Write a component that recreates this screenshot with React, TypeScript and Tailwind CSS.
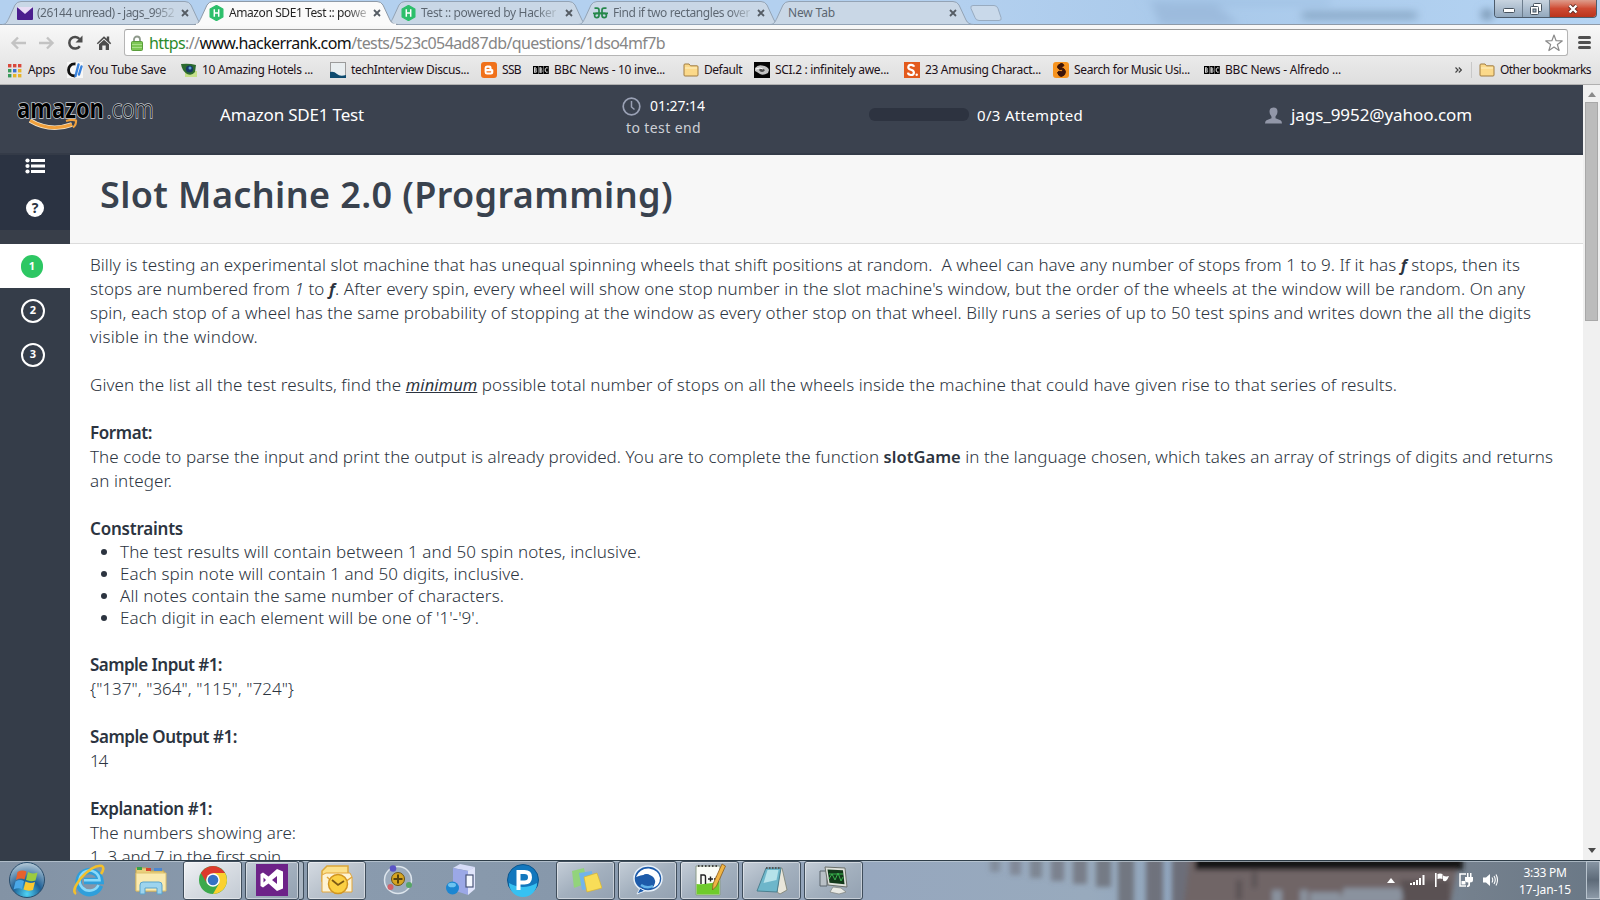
import { useLayoutEffect, useRef, useState } from "react";
import type { ReactNode } from "react";

/** A single line of text whose tracking is computed so that it spans `w` pixels. */
function Fit({ w, className = "", children }: { w: number; className?: string; children: ReactNode }) {
  const ref = useRef<HTMLSpanElement>(null);
  const [spacing, setSpacing] = useState(0);
  useLayoutEffect(() => {
    const el = ref.current;
    if (!el) return;
    const n = (el.textContent || "").length;
    setSpacing((w - el.getBoundingClientRect().width) / n);
  }, [w]);
  return (
    <span className={`block shrink-0 overflow-visible whitespace-pre ${className}`} style={{ width: w }}>
      <span ref={ref} className="inline-block" style={{ letterSpacing: spacing }}>
        {children}
      </span>
    </span>
  );
}

/* ---------- browser chrome ---------- */

function HackerIcon() {
  return (
    <svg width="15" height="16" viewBox="0 0 15 16">
      <path d="M7.5.5 13.8 4v8L7.5 15.5 1.2 12V4z" fill="#2dbf6b" stroke="#2dbf6b" strokeWidth="1.4" strokeLinejoin="round" />
      <path d="M5.3 4.3v7.4M9.7 4.3v7.4M5.3 8h4.400" stroke="#fff" strokeWidth="1.5" fill="none" />
    </svg>
  );
}
function MailIcon() {
  return (
    <svg width="16" height="13" viewBox="0 0 16 13">
      <rect width="16" height="13" rx="1" fill="#4b1e8e" />
      <path d="M0 0h16L8 7z" fill="#e9ddf5" />
    </svg>
  );
}
function GeeksIcon() {
  return (
    <svg width="15" height="12" viewBox="0 0 15 12" fill="none" stroke="#26884b" strokeWidth="1.7">
      <path d="M1.500 1.200H4q2 0 2 2v5.400q0 2-2.200 2T1.600 8.500t2-2.200H15" />
      <path d="M13.500 1.200H11q-2 0-2 2v5.400q0 2 2.200 2t2.200-2.100-2-2.200H0" />
    </svg>
  );
}

function Tab({ title, w, icon, active, dim = true }: { title: string; w: number; icon?: ReactNode; active?: boolean; dim?: boolean }) {
  return (
    <div className={active ? "relative z-10 h-[24px] w-[192px] shrink-0" : "relative h-[24px] w-[192px] shrink-0"}>
      <svg className="absolute left-0 top-0" width="206" height="26" viewBox="0 0 206 26">
        <path
          d="M0 24.500C4 24.500 5 22 7 18L13 5Q15 1.500 19 1.500H183Q187 1.500 189 5L196 20Q198 24.500 204 24.500Z"
          fill={active ? "#fafafa" : "#c9d7e6"}
          stroke={active ? "#8e9aa8" : "#93a3b5"}
          strokeWidth="1"
        />
        {active && <path d="M2 24.500H202" stroke="#fafafa" strokeWidth="2" />}
      </svg>
      <div className="relative flex h-[25px] items-center pl-[15px] pt-px">
        {icon && <div className="flex w-[20px] shrink-0 items-center">{icon}</div>}
        <div className={icon ? "w-[138px] overflow-hidden" : "w-[158px] overflow-hidden pl-[3px]"}>
          <Fit
            w={w}
            className={
              active
                ? "bg-gradient-to-r from-[#222] from-85% to-[#bbb] bg-clip-text text-[12px] text-transparent"
                : dim
                  ? "bg-gradient-to-r from-[#5b6570] from-85% to-[#b4c0cc] bg-clip-text text-[12px] text-transparent"
                  : "text-[12px] text-[#5b6570]"
            }
          >
            {title}
          </Fit>
        </div>
        <svg className="ml-[6px]" width="8" height="8" viewBox="0 0 8 8">
          <path d="M1 1l6 6M7 1L1 7" stroke="#555c64" strokeWidth="1.8" />
        </svg>
      </div>
    </div>
  );
}

function WindowButtons() {
  return (
    <div className="mr-[3px] flex h-[18px] overflow-hidden rounded-b-[4px] border border-t-0 border-[#4c5b6b]">
      <div className="flex w-[28px] items-center justify-center border-r border-[#6d7d8d] bg-gradient-to-b from-[#c8d4e0] to-[#93a8bd]">
        <svg width="12" height="5" className="mt-1" viewBox="0 0 12 5"><rect x=".5" y=".5" width="11" height="4" rx="1" fill="#fff" stroke="#46525e" /></svg>
      </div>
      <div className="flex w-[27px] items-center justify-center border-r border-[#6d7d8d] bg-gradient-to-b from-[#c8d4e0] to-[#93a8bd]">
        <svg width="12" height="12" viewBox="0 0 12 12" fill="#fff" stroke="#46525e">
          <rect x="3.500" y=".5" width="8" height="8" rx="1" />
          <rect x=".5" y="3.500" width="8" height="8" rx="1" />
          <rect x="3" y="6" width="3" height="3" fill="#9db0c3" />
        </svg>
      </div>
      <div className="flex w-[46px] items-center justify-center bg-gradient-to-b from-[#dd9c8c] via-[#cf4a33] to-[#b9341c]">
        <svg width="12" height="10" viewBox="0 0 12 10">
          <path d="M2.500 1.500l7 7M9.500 1.500l-7 7" stroke="#5b2a24" strokeWidth="4" />
          <path d="M2.500 1.500l7 7M9.500 1.500l-7 7" stroke="#fff" strokeWidth="2.400" />
        </svg>
      </div>
    </div>
  );
}

function TitleBar() {
  return (
    <div className="relative flex h-[24px] bg-gradient-to-r from-[#b3d0ef] from-60% via-[#a9c9ea] via-75% to-[#b5d4f3]">
      <svg className="absolute left-[960px] top-0" width="540" height="24" viewBox="0 0 540 24">
        <defs><filter id="soft" x="-20%" y="-50%" width="140%" height="200%"><feGaussianBlur stdDeviation="4" /></filter></defs>
        <g filter="url(#soft)">
          <path d="M190 0h60l30 25H200z" fill="#98b8da" opacity=".8" />
          <path d="M180 0h190v5H210z" fill="#9fc0e2" />
          <rect x="342" y="12" width="115" height="7" fill="#7b98b6" opacity=".8" />
          <rect x="522" y="10" width="10" height="9" fill="#6e8aa6" />
        </g>
      </svg>
      <div className="relative flex pl-[2px]">
        <Tab title="(26144 unread) - jags_9952" w={137} icon={<MailIcon />} />
        <Tab title="Amazon SDE1 Test :: powe" w={137} icon={<HackerIcon />} active />
        <Tab title="Test :: powered by Hacker" w={135} icon={<HackerIcon />} />
        <Tab title="Find if two rectangles over" w={137} icon={<GeeksIcon />} />
        <Tab title="New Tab" w={47} dim={false} />
        <svg className="ml-[8px] mt-[5px]" width="32" height="17" viewBox="0 0 32 17">
          <path d="M3 .5h21q3 0 4 3l3 9q1 3-2 3H9q-3 0-4-3L1 3.500Q0 .5 3 .5z" fill="#c9d9ea" stroke="#98abc0" />
        </svg>
      </div>
      <div className="relative ml-auto"><WindowButtons /></div>
    </div>
  );
}

function AddressBar() {
  return (
    <div className="flex h-[35px] items-center">
      <div className="flex w-[124px] items-center pl-[10px]">
        <svg width="16" height="14" viewBox="0 0 16 14" fill="none" stroke="#c3c3c3" strokeWidth="2.400"><path d="M8 1.500L2.500 7 8 12.500M2.500 7H16" /></svg>
        <svg className="ml-[13px]" width="16" height="14" viewBox="0 0 16 14" fill="none" stroke="#c3c3c3" strokeWidth="2.400"><path d="M8 1.500L13.500 7 8 12.500M13.500 7H0" /></svg>
        <svg className="ml-[12px]" width="16" height="16" viewBox="0 0 16 16">
          <path d="M12.800 11.200A5.800 5.800 0 1 1 12.500 4" fill="none" stroke="#4c4c4c" strokeWidth="2.500" />
          <path d="M15.500.5v7h-7z" fill="#4c4c4c" />
        </svg>
        <svg className="ml-[13px]" width="16" height="16" viewBox="0 0 16 16" fill="#4c4c4c">
          <path d="M8 1.200L.8 8.200l1 1L8 3.400l6.200 5.800 1-1L13.200 6V1.500h-2.400v2.200z" />
          <path d="M3 9.300L8 4.700l5 4.600V15H9.700v-4.500H6.300V15H3z" />
        </svg>
      </div>
      <div className="flex h-[27px] w-[1444px] items-center rounded-[3px] border border-[#b5b5b5] border-t-[#9a9a9a] bg-white pl-[6px] pr-[4px]">
        <svg width="12" height="16" viewBox="0 0 12 16">
          <path d="M3 8V4.500a3 3 0 0 1 6 0V8" fill="none" stroke="#8f9a8c" strokeWidth="1.800" />
          <rect x=".5" y="6.500" width="11" height="9" rx="1" fill="#7cc653" stroke="#5a9d3c" />
          <path d="M1 9.500h10M1 12.500h10" stroke="#a9df88" />
        </svg>
        <Fit w={516} className="ml-[6px] text-[16px] leading-[22px] text-[#868686]">
          <span className="text-[#2b8a2b]">https</span>://<span className="text-[#111]">www.hackerrank.com</span>/tests/523c054ad87db/questions/1dso4mf7b
        </Fit>
        <svg className="ml-auto" width="18" height="18" viewBox="0 0 18 18">
          <path d="M9 1l2.100 5.700 6.100.2-4.800 3.700 1.700 5.900L9 13l-5.100 3.500 1.700-5.900L.8 6.900l6.100-.2z" fill="#fff" stroke="#8a8a8a" strokeWidth="1.200" strokeLinejoin="round" />
        </svg>
      </div>
      <div className="ml-[10px] flex flex-col gap-[2px]">
        <div className="h-[3px] w-[13px] rounded-sm bg-[#505050]" />
        <div className="h-[3px] w-[13px] rounded-sm bg-[#505050]" />
        <div className="h-[3px] w-[13px] rounded-sm bg-[#505050]" />
      </div>
    </div>
  );
}

const AppsIcon = (
  <svg width="16" height="16" viewBox="0 0 16 16">
    {["#d9483b", "#d9483b", "#d9483b", "#3a9a5b", "#3c6fd0", "#e7b429", "#3a9a5b", "#e7b429", "#e7b429"].map((c, i) => (
      <rect key={i} x={1 + (i % 3) * 5} y={2 + Math.floor(i / 3) * 5} width="3.400" height="3.400" fill={c} />
    ))}
  </svg>
);
const YouTubeSaveIcon = (
  <svg width="16" height="16" viewBox="0 0 16 16">
    <rect width="16" height="16" fill="#f7f7f7" />
    <path d="M8.500 2C3.500 1.500 1.500 5 1.500 8s2 6 6.500 6" fill="none" stroke="#111" strokeWidth="2.800" />
    <path d="M11.500 2.500L8.500 14M14.500 4.500l-2.500 8" stroke="#3a83dd" strokeWidth="2.400" strokeLinecap="round" />
  </svg>
);
const HotelsIcon = (
  <svg width="16" height="14" viewBox="0 0 16 14">
    <rect x="4" y="8" width="12" height="6" fill="#c5e08a" />
    <path d="M0 1q8-1 15 1l-1 7q-3 4-8 2Q1 8 0 1z" fill="#2c6b2f" />
    <circle cx="8.500" cy="6" r="3.600" fill="#173a66" /><circle cx="9" cy="5" r="1.500" fill="#58a0d8" />
  </svg>
);
const TechIcon = (
  <svg width="16" height="16" viewBox="0 0 16 16">
    <rect x=".5" y=".5" width="15" height="15" fill="#e9eef0" stroke="#9b9b9b" />
    <path d="M0 10q4-1 7 2t9 1v3H0z" fill="#0d4a6e" />
  </svg>
);
const BloggerIcon = (
  <svg width="16" height="16" viewBox="0 0 16 16">
    <rect width="16" height="16" rx="3" fill="#f0711a" />
    <path d="M6 3.500h2.500q2 0 2 2v1q0 .8 1 .8.800 0 .8 1V10q0 2.500-2.500 2.500H6Q3.600 12.500 3.600 10V6Q3.600 3.500 6 3.500z" fill="#fff" />
    <path d="M6 6.300h2M6 9.800h3.600" stroke="#f0711a" strokeWidth="1.300" strokeLinecap="round" />
  </svg>
);
const BbcIcon = (
  <svg width="16" height="8" viewBox="0 0 16 8">
    <path d="M0 0h5v8H0zM5.400 0h5v8h-5zM10.800 0h5v8h-5z" fill="#000" />
    <path d="M1.700 1.500v5M1.200 1.900H3M1.200 4H3.500M1.200 6.100H3.500M3.300 2.300v1.200M3.600 4.500v1.200M7.100 1.500v5M6.600 1.900h1.800M6.600 4h2.300M6.600 6.100h2.300M8.700 2.300v1.200M9 4.500v1.200M14.700 1.900h-1.700q-.8.300-.8 2t.8 2.200h1.700" fill="none" stroke="#fff" strokeWidth=".9" />
  </svg>
);
const FolderIcon = (
  <svg width="16" height="14" viewBox="0 0 16 14">
    <path d="M1 3V2q0-1 1-1h4l1.500 1.800H14q1 0 1 1V12q0 1-1 1H2q-1 0-1-1z" fill="#fbd98a" stroke="#a07c42" />
    <path d="M2 5h12" stroke="#fff1c4" />
  </svg>
);
const SciIcon = (
  <svg width="16" height="16" viewBox="0 0 16 16">
    <rect width="16" height="16" fill="#050505" />
    <path d="M1 6q3-3.500 7-2.500 6 .5 7 4.500l-1 3q-5 3-8 1Q3 10 1 9z" fill="#c2c2c2" />
    <path d="M5 8q1-2 3-1.500t3 1.500q-1 2-3 2T5 8z" fill="#4a4a4a" /><path d="M2 7q4-2 7 0" stroke="#fff" fill="none" />
  </svg>
);
const SIcon = (
  <svg width="16" height="16" viewBox="0 0 16 16">
    <rect width="16" height="16" fill="#e35a1c" />
    <path d="M10 4.800Q9.500 2.800 7 2.800T4.300 5.200Q4.300 7 7 7.700t2.900 2.700q0 2.600-2.900 2.600-2.700 0-3-2.300" fill="none" stroke="#fff" strokeWidth="2.200" />
    <circle cx="12.700" cy="12.700" r="1.200" fill="#fff" />
  </svg>
);
const HoundIcon = (
  <svg width="16" height="16" viewBox="0 0 16 16">
    <rect width="16" height="16" rx="3" fill="#f79420" />
    <path d="M8 1.500q-4 1.500-3.500 4 1 2.500 4 2 2 .5 0 2-3-1-4 1 1 4 4 4 4-1 4-5-1-3-3-3.500Q7 5.500 8 4.500q2 .5 3-1Q10 1 8 1.500z" fill="#3d1408" stroke="#3d1408" />
  </svg>
);

const bookmarks = [
  { cls: "ml-[7px]", icon: AppsIcon, t: "Apps", w: 27 },
  { cls: "ml-[12px]", icon: YouTubeSaveIcon, t: "You Tube Save", w: 78 },
  { cls: "ml-[15px]", icon: HotelsIcon, t: "10 Amazing Hotels ...", w: 111 },
  { cls: "ml-[17px]", icon: TechIcon, t: "techInterview Discus...", w: 118 },
  { cls: "ml-[12px]", icon: BloggerIcon, t: "SSB", w: 19 },
  { cls: "ml-[12px]", icon: BbcIcon, t: "BBC News - 10 inve...", w: 111 },
  { cls: "ml-[18px]", icon: FolderIcon, t: "Default", w: 38 },
  { cls: "ml-[12px]", icon: SciIcon, t: "SCI.2 : infinitely awe...", w: 114 },
  { cls: "ml-[15px]", icon: SIcon, t: "23 Amusing Charact...", w: 116 },
  { cls: "ml-[12px]", icon: HoundIcon, t: "Search for Music Usi...", w: 116 },
  { cls: "ml-[14px]", icon: BbcIcon, t: "BBC News - Alfredo ...", w: 116 },
];

function BookmarksBar() {
  return (
    <div className="flex h-[24px] items-center pb-[4px] text-[12px] leading-[16px] text-[#1c1018]">
      {bookmarks.map((b, i) => (
        <div key={i} className={`flex items-center gap-[5px] ${b.cls}`}>
          <div className="flex w-[16px] shrink-0 items-center">{b.icon}</div>
          <Fit w={b.w}>{b.t}</Fit>
        </div>
      ))}
      <div className="ml-auto flex items-center pr-[9px]">
        <svg width="7" height="6" viewBox="0 0 7 6" fill="none" stroke="#444" strokeWidth="1.200"><path d="M.5.5L3 3 .5 5.500M3.800.5L6.300 3 3.800 5.500" /></svg>
        <div className="ml-[9px] h-[16px] w-px bg-[#c8c8c8]" />
        <div className="ml-[7px] flex items-center gap-[5px]">
          {FolderIcon}
          <Fit w={91}>Other bookmarks</Fit>
        </div>
      </div>
    </div>
  );
}

/* ---------- page ---------- */

function AmazonLogo() {
  return (
    <svg className="overflow-visible" width="150" height="48" viewBox="0 0 150 48">
      <text x="1" y="31" textLength="87" lengthAdjust="spacingAndGlyphs" fontFamily="Open Sans, sans-serif" fontSize="26" fontWeight="700" fill="#000" stroke="#c9cdd2" strokeWidth="1.600" paintOrder="stroke">amazon</text>
      <text x="90.500" y="31" textLength="47" lengthAdjust="spacingAndGlyphs" fontFamily="Open Sans, sans-serif" fontSize="26" fontWeight="300" fill="#14171c" stroke="#c9cdd2" strokeWidth="1.500" paintOrder="stroke">.com</text>
      <path d="M14 33.500q20 12 42 4" fill="none" stroke="#f5e6cc" strokeWidth="4.600" />
      <path d="M14 33.500q20 12 42 4" fill="none" stroke="#f0a03c" strokeWidth="3" />
      <path d="M50 34q6-2 10-.5.500 4-3 7" fill="none" stroke="#f0a03c" strokeWidth="2.200" />
    </svg>
  );
}

function PageHeader() {
  return (
    <div className="flex h-[70px] shrink-0 border-b-2 border-[#343b48] bg-[#3b424f] text-white">
      <div className="w-[220px] pl-[16px] pt-[2px]"><AmazonLogo /></div>
      <Fit w={144} className="pt-[18px] text-[17px] leading-[24px]">Amazon SDE1 Test</Fit>
      <div className="ml-[258px] w-[90px] pt-[10px]">
        <div className="flex h-[22px] items-center">
          <svg width="19" height="19" viewBox="0 0 19 19" fill="none" stroke="#9aa1b5">
            <circle cx="9.500" cy="9.500" r="8.300" strokeWidth="1.700" /><path d="M9.500 4v6l3 2.500" strokeWidth="1.500" />
          </svg>
          <Fit w={55} className="ml-[9px] text-[14px] leading-[22px]">01:27:14</Fit>
        </div>
        <Fit w={75} className="ml-[4px] text-[14px] leading-[22px] text-[#cdd0d6]">to test end</Fit>
      </div>
      <div className="ml-[157px] mt-[23px] h-[13px] w-[100px] rounded-[6px] bg-[#2d3340]" />
      <Fit w={106} className="ml-[8px] pt-[18px] text-[15px] leading-[24px]">0/3 Attempted</Fit>
      <svg className="ml-[182px] mt-[22px]" width="17" height="17" viewBox="0 0 17 17" fill="#9297a8">
        <path d="M8.500.5q4 0 4 4.200 0 3-2 4.800v1.700l5 2q1.500.8 1.500 3.300H0q0-2.500 1.500-3.300l5-2V9.500q-2-1.800-2-4.800 0-4.200 4-4.200z" />
      </svg>
      <Fit w={181} className="ml-[9px] pt-[18px] text-[17px] leading-[24px]">jags_9952@yahoo.com</Fit>
    </div>
  );
}

function Sidebar() {
  return (
    <div className="w-[70px] shrink-0 bg-[#353d49]">
      <div className="flex h-[75px] flex-col items-center bg-[#2b3342] pt-[3px]">
        <svg width="20" height="16" viewBox="0 0 20 16" fill="#fff">
          <circle cx="2.500" cy="2.500" r="2.100" /><circle cx="2.500" cy="8" r="2.100" /><circle cx="2.500" cy="13.500" r="2.100" />
          <path d="M6 1h14v3H6zM6 6.500h14v3H6zM6 12h14v3H6z" />
        </svg>
        <div className="mt-[25px] flex h-[18px] w-[18px] items-center justify-center rounded-full bg-white text-[14px] font-bold leading-none text-[#2b3342]">?</div>
      </div>
      <div className="h-[14px] bg-[#383e49]" />
      <div className="flex h-[44px] items-center bg-white pl-[21px]">
        <div className="flex h-[23px] w-[22px] items-center justify-center rounded-full bg-[#2dc763] text-[11px] font-bold text-white">1</div>
      </div>
      {["2", "3"].map((n) => (
        <div key={n} className="flex h-[44px] items-center pl-[21px] pt-px">
          <div className="flex h-[24px] w-[24px] items-center justify-center rounded-full border-2 border-white text-[11px] font-bold text-white">{n}</div>
        </div>
      ))}
    </div>
  );
}

function Problem() {
  return (
    <div className="pl-[20px] pt-[9px] text-[17px] font-light leading-[24px] text-[#2c3440]">
      <Fit w={1430}>
        {"Billy is testing an experimental slot machine that has unequal spinning wheels that shift positions at random.  A wheel can have any number of stops from 1 to 9. If it has "}
        <b className="text-[16px] font-bold italic">f</b>
        {" stops, then its"}
      </Fit>
      <Fit w={1435}>
        {"stops are numbered from "}<i>1</i>{" to "}<b className="text-[16px] font-bold italic">f</b>
        {". After every spin, every wheel will show one stop number in the slot machine's window, but the order of the wheels at the window will be random. On any"}
      </Fit>
      <Fit w={1441}>
        {"spin, each stop of a wheel has the same probability of stopping at the window as every other stop on that wheel. Billy runs a series of up to 50 test spins and writes down the all the digits"}
      </Fit>
      <Fit w={168}>visible in the window.</Fit>
      <Fit w={1307} className="mt-[24px]">
        {"Given the list all the test results, find the "}
        <span className="text-[16.500px] font-normal italic underline">minimum</span>
        {" possible total number of stops on all the wheels inside the machine that could have given rise to that series of results."}
      </Fit>
      <Fit w={62} className="mt-[24px] font-semibold">Format:</Fit>
      <Fit w={1463}>
        {"The code to parse the input and print the output is already provided. You are to complete the function "}
        <b className="text-[16.500px] font-semibold">slotGame</b>
        {" in the language chosen, which takes an array of strings of digits and returns"}
      </Fit>
      <Fit w={82}>an integer.</Fit>
      <Fit w={93} className="mt-[24px] font-semibold">Constraints</Fit>
      <ul className="list-disc pl-[30px] leading-[22px]">
        <li><Fit w={521}>The test results will contain between 1 and 50 spin notes, inclusive.</Fit></li>
        <li><Fit w={404}>Each spin note will contain 1 and 50 digits, inclusive.</Fit></li>
        <li><Fit w={384}>All notes contain the same number of characters.</Fit></li>
        <li><Fit w={359}>Each digit in each element will be one of '1'-'9'.</Fit></li>
      </ul>
      <Fit w={132} className="mt-[24px] font-semibold">Sample Input #1:</Fit>
      <Fit w={204}>{'{"137", "364", "115", "724"}'}</Fit>
      <Fit w={147} className="mt-[24px] font-semibold">Sample Output #1:</Fit>
      <Fit w={17}>14</Fit>
      <Fit w={122} className="mt-[24px] font-semibold">Explanation #1:</Fit>
      <Fit w={206}>The numbers showing are:</Fit>
      <Fit w={191}>1, 3 and 7 in the first spin</Fit>
    </div>
  );
}

function Scrollbar() {
  return (
    <div className="flex w-[17px] shrink-0 flex-col items-center bg-[#f0f0f0]">
      <svg className="mt-[7px]" width="8" height="5" viewBox="0 0 8 5"><path d="M0 5L4 0l4 5z" fill="#8a8a8a" /></svg>
      <div className="mt-[5px] h-[219px] w-[13px] border border-[#a8a8a8] bg-[#bcbcbc]" />
      <svg className="mb-[7px] mt-auto" width="8" height="5" viewBox="0 0 8 5"><path d="M0 0l4 5 4-5z" fill="#4a4a4a" /></svg>
    </div>
  );
}

/* ---------- taskbar ---------- */

function Wallpaper() {
  const stripes = [990, 1010, 1030, 1051, 1073, 1096, 1118, 1146, 1172];
  return (
    <svg className="absolute inset-0" width="1600" height="40" viewBox="0 0 1600 40">
      <defs>
        <linearGradient id="glass" x1="0" x2="1">
          <stop offset="0" stopColor="#8393a5" /><stop offset=".2" stopColor="#8a9bae" /><stop offset=".35" stopColor="#8798ab" />
          <stop offset=".54" stopColor="#96a7be" /><stop offset=".68" stopColor="#98aabd" /><stop offset=".75" stopColor="#8fa5bf" />
          <stop offset=".92" stopColor="#74808d" /><stop offset="1" stopColor="#6a7886" />
        </linearGradient>
        <filter id="haze" x="-5%" y="-50%" width="110%" height="200%"><feGaussianBlur stdDeviation="2.500" /></filter>
      </defs>
      <rect width="1600" height="40" fill="url(#glass)" />
      <g filter="url(#haze)">
        {stripes.map((x, i) => (
          <rect key={x} x={x} y="-4" width={10 + i} height={i > 5 ? 50 : 16 + i * 3} fill="#65646b" opacity={0.4 + i * 0.055} />
        ))}
        <path d="M1190-5h270l-10 50H1184z" fill="#6f6566" />
        <path d="M1310 32h30v12h-30zM1344 28h70l-16 16h-60z" fill="#8a929e" />
        <path d="M1272 30h10v14h-10zM1300 30h8v14h-8z" fill="#8a929e" />
        <path d="M1236 20h6v20h-6zM1252 12h5v16h-5z" fill="#5c5254" />
        <path d="M1400 20h50v24h-46z" fill="#5a5153" />
        <rect x="1195" y="-4" width="268" height="14" fill="#131417" />
      </g>
      <path d="M0 .5h1600" stroke="#2e3d48" /><path d="M0 1.500h1600" stroke="#c2ced8" opacity=".7" />
    </svg>
  );
}

function TaskButton({ cls, children }: { cls: string; children: ReactNode }) {
  return (
    <div className={`relative flex h-[39px] items-center justify-center rounded-[3px] border border-[#3f4d5b] shadow-[inset_0_0_0_1px_rgba(255,255,255,0.45)] ${cls}`}>
      {children}
    </div>
  );
}
const plainBtn = "w-[59px] bg-gradient-to-br from-[#c5ced8] via-[#a3b0be] to-[#93a1b1]";

function Taskbar() {
  return (
    <div className="relative h-[40px]">
      <Wallpaper />
      <div className="relative flex h-full items-center text-white">
        <svg className="ml-[8px]" width="38" height="38" viewBox="0 0 38 38">
          <defs><radialGradient id="orb" cx=".5" cy=".9" r=".9"><stop offset="0" stopColor="#4fd4f5" /><stop offset=".45" stopColor="#1c5f96" /><stop offset="1" stopColor="#b8cbd8" /></radialGradient></defs>
          <circle cx="19" cy="19" r="17.500" fill="url(#orb)" stroke="#294d6c" />
          <path d="M9.500 11q4.500-2.500 9-.5l-2 8q-4-2-8.500.5z" fill="#e8602c" />
          <path d="M20 11q4 2.500 9.500.5l-2 8q-5 1.500-9.500-.5z" fill="#9ccb3f" />
          <path d="M7.500 20.500q4.500-2.500 8.500-.5l-2 8q-4-1.500-8.500.5z" fill="#4aa8e8" />
          <path d="M17.500 20.500q4.500 2.500 9.500.5l-2 8q-5 1.500-9.500-.5z" fill="#fbc831" />
        </svg>
        <svg className="ml-[26px]" width="34" height="34" viewBox="0 0 34 34">
          <path d="M28 22.500A11 11 0 1 1 28.500 18H12" fill="none" stroke="#2f9fdb" strokeWidth="6.500" />
          <path d="M26.500 22A10 10 0 1 1 27.500 17.200H12" fill="none" stroke="#8ad9f9" strokeWidth="2.600" />
          <path d="M4 31Q-1 28 9 15 22 1 30 3q3 2-1 8" fill="none" stroke="#f3c02c" strokeWidth="2.600" />
        </svg>
        <svg className="ml-[28px]" width="34" height="32" viewBox="0 0 34 32">
          <path d="M2 4h12l2 3h14v20H2z" fill="#e9cf7c" stroke="#c6a54e" />
          <path d="M3 3h5v3H3z" fill="#37a24a" /><path d="M12 4h5v3h-5z" fill="#d6442e" /><path d="M20 4h8v3h-8z" fill="#4d87cf" />
          <path d="M2 9h30v18H2z" fill="#faeab0" stroke="#dcc06c" />
          <path d="M6 30V21q0-3 3-3h16q3 0 3 3v9h-5v-6H11v6z" fill="#9dd4ee" stroke="#5ba3cb" />
        </svg>
        <TaskButton cls="ml-[15px] w-[59px] bg-gradient-to-br from-[#f0f2f5] via-[#d7dce2] to-[#c2cad3]">
          <svg width="30" height="30" viewBox="0 0 30 30">
            <circle cx="15" cy="15" r="14" fill="#3ba94c" />
            <path d="M15 15L2.900 8A14 14 0 0 1 27.100 8H15z" fill="#dc3a2c" />
            <path d="M15 8h12.100A14 14 0 0 1 15 29l6-10.500z" fill="#fbd12f" />
            <path d="M15 8a7 7 0 0 0-6 10.500L2.900 8z" fill="#dc3a2c" />
            <circle cx="15" cy="15" r="6.800" fill="#fff" /><circle cx="15" cy="15" r="5.300" fill="#3572c4" />
          </svg>
        </TaskButton>
        <TaskButton cls="ml-[3px] w-[54px] bg-gradient-to-br from-[#c5ced8] via-[#a3b0be] to-[#93a1b1]">
          <svg width="32" height="32" viewBox="0 0 32 32">
            <rect width="32" height="32" fill="#6d2288" />
            <path d="M21 5l6 2.500v17L21 27l-8.500-7.500L7 23.500 4.500 22V10L7 8.500l5.500 4zM21 12l-5 4 5 4zM7.500 13.500v5l2.500-2.500z" fill="#fff" fillRule="evenodd" />
          </svg>
        </TaskButton>
        <div className="h-[39px] w-[5px] rounded-r-[3px] border border-l-0 border-[#3f4d5b] bg-[#a9b5c2]" />
        <TaskButton cls="ml-[3px] w-[59px] bg-gradient-to-br from-[#d5dbe2] via-[#bac3cd] to-[#a9b4c0]">
          <svg width="32" height="30" viewBox="0 0 32 30">
            <path d="M6 1h21v15H1V6z" fill="#fbe08a" stroke="#dba73a" strokeWidth="1.500" />
            <path d="M5 8h24l2 4v15H1V10z" fill="#fdf3d4" stroke="#e3a63a" />
            <path d="M31 12L17 22 6 12" fill="none" stroke="#e3a63a" strokeWidth="1.500" />
            <circle cx="17" cy="19" r="9.500" fill="#fbd043" stroke="#d19520" strokeWidth="1.500" />
            <path d="M11 15l6 5 6-4" fill="none" stroke="#7c5a14" strokeWidth="1.800" />
          </svg>
        </TaskButton>
        <svg className="ml-[16px]" width="32" height="32" viewBox="0 0 32 32">
          <circle cx="16" cy="16" r="13.500" fill="#aebccc" fillOpacity=".5" stroke="#dce4ec" strokeWidth="1.500" />
          <circle cx="16" cy="15" r="6.500" fill="#d7a521" stroke="#6c5313" />
          <path d="M16 10.500v9M11.500 15h9" stroke="#58430c" strokeWidth="2" />
          <circle cx="11" cy="4.500" r="3.300" fill="#5b55c6" /><circle cx="8.500" cy="23" r="3" fill="#d2636c" /><circle cx="27" cy="21" r="3" fill="#57a566" />
        </svg>
        <svg className="ml-[31px]" width="32" height="34" viewBox="0 0 32 34">
          <path d="M8 5l7-4 15 3-6 4z" fill="#d6dcf8" /><path d="M8 5l15 3v24L8 27z" fill="#9ba8e6" /><path d="M23 8l7-4v22l-7 6z" fill="#dfe4fa" />
          <rect x="21" y="12" width="7" height="12" fill="#f5f8ff" stroke="#4a5578" strokeWidth="1.200" />
          <circle cx="7.500" cy="25" r="6.500" fill="#1c86d1" /><ellipse cx="7" cy="22" rx="4" ry="2.300" fill="#6dc3f0" />
        </svg>
        <svg className="ml-[29px]" width="34" height="34" viewBox="0 0 34 34">
          <circle cx="17" cy="17" r="15.500" fill="#1277bd" stroke="#0c568e" /><path d="M3 20a14 14 0 0 0 28 0q-14 8-28 0z" fill="#36c1f2" />
          <path d="M12.500 27V9h6q5.500 0 5.500 5.200t-5.500 5.200h-5" fill="none" stroke="#fff" strokeWidth="4" />
        </svg>
        <TaskButton cls={`ml-[16px] ${plainBtn}`}>
          <svg width="32" height="28" viewBox="0 0 32 28">
            <path d="M2 5l12-3 3 15-13 5z" fill="#92d37b" /><path d="M9 7l13-2 1 17-11 2z" fill="#72b4ea" />
            <path d="M14 11l13-4 5 15-15 4z" fill="#f8dd58" stroke="#d8b52e" strokeWidth=".7" />
          </svg>
        </TaskButton>
        <TaskButton cls={`ml-[3px] ${plainBtn}`}>
          <svg width="32" height="32" viewBox="0 0 32 32">
            <ellipse cx="16" cy="14.500" rx="14" ry="12.500" fill="#1d5baa" stroke="#e8f1fa" strokeWidth="1.500" />
            <path d="M8 24l-3 6 8-3z" fill="#1d5baa" stroke="#e8f1fa" />
            <path d="M4 13Q8 4 17 4.500 27 6 28 14q0 8-8 10 5-5 2-10-3-4-8-3.500Q8 11 4 13z" fill="#fff" />
            <circle cx="14.500" cy="14" r="4" fill="#1d5baa" /><path d="M9 21q6 4 12 1" stroke="#62b3ea" strokeWidth="2.500" fill="none" />
          </svg>
        </TaskButton>
        <TaskButton cls={`ml-[3px] ${plainBtn}`}>
          <svg width="32" height="34" viewBox="0 0 32 34">
            <path d="M2 3h24v29H2z" fill="#fbfdf7" stroke="#8a9a88" /><path d="M2.500 21q12 1 23-3v13.500h-23z" fill="#6fcb2c" />
            <path d="M4 3h20" stroke="#444" strokeWidth="2" strokeDasharray="1.500 2" />
            <path d="M7 21v-9h3q1.500 0 1.500 2v7M14 16h5M16.500 13.500v5M20 16h5M22.500 13.500v5" fill="none" stroke="#222" strokeWidth="1.400" />
            <path d="M28 1l3.500 2-9 20-4 4 .5-6z" fill="#f0b544" stroke="#8a5a1a" strokeWidth=".8" />
          </svg>
        </TaskButton>
        <TaskButton cls={`ml-[3px] ${plainBtn}`}>
          <svg width="32" height="30" viewBox="0 0 32 30">
            <path d="M24 3h2l5 22-7 4-3-2z" fill="#e9e6da" stroke="#7b7f70" strokeWidth=".8" />
            <path d="M10 3h15l-4 24-20-1z" fill="#6db6ca" stroke="#4c8090" />
            <path d="M11.500 5h11l-2 10-13 3z" fill="#b6e2ea" /><path d="M10 3h15" stroke="#555" strokeWidth="2" strokeDasharray="1.500 1.500" />
          </svg>
        </TaskButton>
        <TaskButton cls={`ml-[3px] ${plainBtn}`}>
          <svg width="34" height="30" viewBox="0 0 34 30">
            <path d="M3 6h7v15H3z" fill="#b9c0c6" stroke="#5b646c" /><path d="M8 2l20 1 2 19-19-2z" fill="#dfe2dc" stroke="#6a6f6a" />
            <path d="M10.500 4.500l15.500.8 1.500 14-15-1.500z" fill="#12381a" /><path d="M12 14l3-5 3 6 3-7 3 8 2-4M12 9h14" fill="none" stroke="#39b34d" />
            <path d="M16 22l8 1 5 4-7 2-9-2z" fill="#e8e9e4" stroke="#7c817c" strokeWidth=".7" />
          </svg>
        </TaskButton>

        <div className="ml-auto flex h-full items-center">
          <svg width="8" height="5" viewBox="0 0 8 5"><path d="M0 5l4-5 4 5z" fill="#fff" /></svg>
          <svg className="ml-[15px]" width="16" height="12" viewBox="0 0 16 12" fill="#fff"><path d="M0 9h2v2H0zM3 8h2v3H3zM6 6h2v5H6zM9 4h2v7H9zM12.500 1h2v10h-2z" /></svg>
          <svg className="ml-[8px]" width="16" height="16" viewBox="0 0 16 16" fill="#fff"><path d="M1 1h1.600v14H1zM3.500 2q2.500-1 5 0v5q-2.500-1-5 0zM9 3.500q3 1.500 6 .5-1 3-3 5-2 .5-3-.5z" /></svg>
          <svg className="ml-[8px]" width="16" height="16" viewBox="0 0 16 16">
            <path d="M8 2H2v12h6" fill="none" stroke="#fff" strokeWidth="1.500" /><path d="M3.500 9h4v3.500h-4z" fill="#fff" />
            <path d="M9 1h1.500v4H9zM12 1h1.500v4H12zM7 5h8v3q0 2.500-3 2.500V13q0 2-3 2v-1.500q1.300 0 1.300-1v-2Q7 10.500 7 8z" fill="#fff" />
          </svg>
          <svg className="ml-[8px]" width="16" height="14" viewBox="0 0 16 14"><path d="M1 4.500h3L8 1v12L4 9.500H1z" fill="#fff" /><path d="M10 4.500q1.500 2.500 0 5M12 3q2.500 4 0 8M14 1.500q3 5.500 0 11" fill="none" stroke="#fff" strokeWidth="1.100" /></svg>
          <div className="ml-[20px] flex w-[54px] flex-col items-center pt-px text-[12px] leading-[17px]">
            <Fit w={43}>3:33 PM</Fit>
            <Fit w={52}>17-Jan-15</Fit>
          </div>
          <div className="ml-[14px] h-[38px] w-[14px] border border-[#b9c4ce] bg-gradient-to-b from-[#8795a3] via-[#5d6a78] to-[#8d9aa8]" />
        </div>
      </div>
    </div>
  );
}

export default function App() {
  return (
    <div className="flex h-[900px] w-[1600px] flex-col overflow-hidden bg-white font-['Noto_Sans','Open_Sans',sans-serif]">
      <TitleBar />
      <div className="h-[61px] border-b border-t border-b-[#b0b0b0] border-t-[#8e9aa8] bg-gradient-to-b from-[#f8f8f8] to-[#dedede]">
        <AddressBar />
        <BookmarksBar />
      </div>
      <div className="flex h-[775px] overflow-hidden">
        <div className="flex w-[1583px] flex-col">
          <PageHeader />
          <div className="flex min-h-0 grow overflow-hidden">
            <Sidebar />
            <div className="w-[1513px]">
              <div className="h-[89px] border-b border-[#dcdcdc] bg-[#f7f7f7] pl-[30px] pt-[15px]">
                <Fit w={573} className="text-[36px] font-semibold leading-[50px] text-[#39424e]">Slot Machine 2.0 (Programming)</Fit>
              </div>
              <Problem />
            </div>
          </div>
        </div>
        <Scrollbar />
      </div>
      <Taskbar />
    </div>
  );
}
